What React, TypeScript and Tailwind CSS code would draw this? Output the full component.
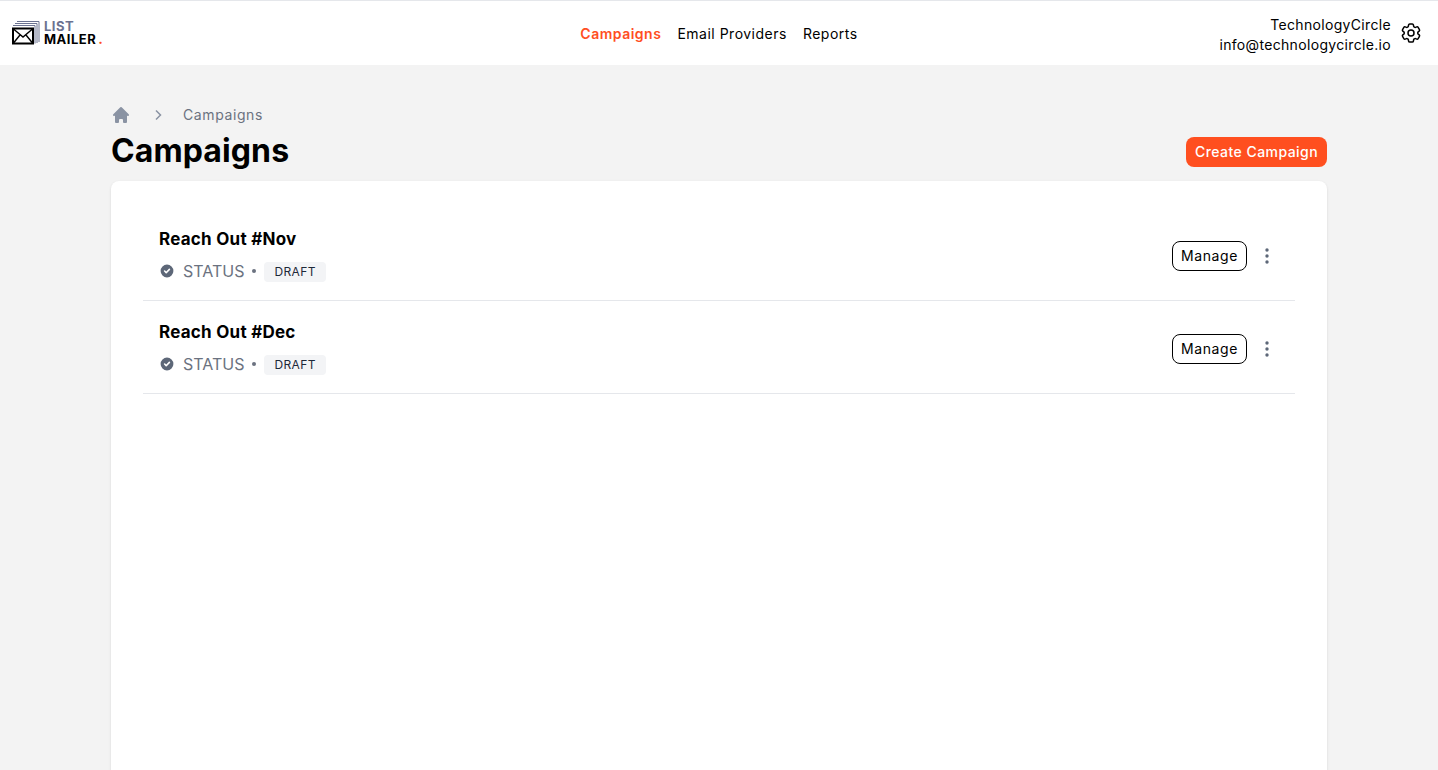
import { HiOutlineCog6Tooth } from 'react-icons/hi2';

function Logo() {
  return (
    <div className="flex items-center gap-[3px] mt-[-1px] ml-[-4px]">
      <svg width="30" height="25" viewBox="0 0 30 25" fill="none">
        <path d="M6 1.5H28V22" stroke="#6b7290" strokeWidth="1" />
        <path d="M4 3.5H26V23" stroke="#6b7290" strokeWidth="1" />
        <path d="M2 5.5H24V23.5" stroke="#6b7290" strokeWidth="1" />
        <rect x="2" y="8.5" width="20" height="15" fill="#fff" stroke="#000" strokeWidth="2" />
        <path d="M2.5 9L12 17L21.5 9M2.5 23L9 15M21.5 23L15 15" stroke="#000" strokeWidth="1.4" />
      </svg>
      <div className="flex flex-col text-[13px] leading-[13px] font-bold tracking-[0.5px]">
        <span className="text-[#6b7290]">LIST</span>
        <span className="text-black">
          MAILER<span className="ml-[2px] font-extrabold text-[#ff4f1f]">.</span>
        </span>
      </div>
    </div>
  );
}

function CampaignRow({ name }: { name: string }) {
  return (
    <div className="flex items-center justify-between h-[93px] px-4 pt-[2px] border-b border-gray-200">
      <div className="flex flex-col mb-[3px]">
        <div className="text-[17px] leading-6 font-bold text-black tracking-[0.25px]">{name}</div>
        <div className="flex items-center mt-[10px] h-5">
          <svg className="w-4 h-4 mr-[8px]" viewBox="0 0 20 20" fill="#5d6778">
            <path
              fillRule="evenodd"
              d="M10 18a8 8 0 100-16 8 8 0 000 16zm3.707-9.293a1 1 0 00-1.414-1.414L9 10.586 7.707 9.293a1 1 0 00-1.414 1.414l2 2a1 1 0 001.414 0l4-4z"
              clipRule="evenodd"
            />
          </svg>
          <span className="text-[16px] text-[#6b7280]">STATUS</span>
          <span className="w-1 h-1 rounded-full bg-[#6b7280] mx-2"></span>
          <span className="h-5 mt-[2px] px-[10px] flex items-center rounded bg-gray-100 text-[12px] text-gray-800 tracking-[0.4px]">
            DRAFT
          </span>
        </div>
      </div>
      <div className="flex items-center mt-[2px] mr-[2px]">
        <button className="w-[75px] h-[30px] pb-[2px] rounded-lg border border-black bg-white text-[14px] text-black tracking-[0.6px]">
          Manage
        </button>
        <svg className="w-5 h-5 ml-[10px]" viewBox="0 0 20 20" fill="#5d6778">
          <circle cx="10" cy="4" r="1.7" />
          <circle cx="10" cy="10" r="1.7" />
          <circle cx="10" cy="16" r="1.7" />
        </svg>
      </div>
    </div>
  );
}

export default function App() {
  return (
    <div className="h-[770px] overflow-hidden bg-[#f3f3f3] font-['Inter',sans-serif]">
      <header className="h-[65px] bg-white border-t border-gray-200 grid grid-cols-[1fr_auto_1fr] items-center px-[15px]">
        <Logo />
        <nav className="flex items-center gap-4 text-[14px] tracking-[0.5px] text-black">
          <span className="font-semibold text-[#ff4f1f]">Campaigns</span>
          <span>Email Providers</span>
          <span>Reports</span>
        </nav>
        <div className="flex items-center justify-end gap-2">
          <div className="text-right text-[14px] leading-5 tracking-[0.33px] text-black pt-[3px]">
            <div>TechnologyCircle</div>
            <div>info@technologycircle.io</div>
          </div>
          <HiOutlineCog6Tooth className="w-6 h-6 text-black" />
        </div>
      </header>
      <main className="max-w-7xl mx-auto px-8">
        <div className="flex items-center h-5 mt-[39px] text-[14px] text-[#6b7280] tracking-[0.6px]">
          <svg className="w-5 h-5 mt-[2px]" viewBox="0 0 20 20" fill="#8a93a3">
            <path d="M10.707 2.293a1 1 0 00-1.414 0l-7 7a1 1 0 001.414 1.414L4 10.414V17a1 1 0 001 1h2a1 1 0 001-1v-2a1 1 0 011-1h2a1 1 0 011 1v2a1 1 0 001 1h2a1 1 0 001-1v-6.586l.293.293a1 1 0 001.414-1.414l-7-7z" />
          </svg>
          <svg className="w-5 h-5 mt-[2px] ml-[17px] mr-[15px]" viewBox="0 0 20 20" fill="none" stroke="#8a93a3" strokeWidth="1.5">
            <path d="M8 5.5l4.5 4.5L8 14.5" />
          </svg>
          <span>Campaigns</span>
        </div>
        <div className="flex items-center justify-between mt-[6px] h-[40px]">
          <h1 className="text-[32px] leading-9 mt-[2px] font-bold text-black tracking-[0.1px]">Campaigns</h1>
          <button className="w-[141px] h-[30px] pb-[1px] rounded-lg bg-[#ff4f1f] text-white text-[14px] tracking-[0.45px] font-medium mt-[4px]">
            Create Campaign
          </button>
        </div>
        <div className="mt-[11px] h-[640px] rounded-lg bg-white shadow-sm px-8 pt-[27px]">
          <CampaignRow name="Reach Out #Nov" />
          <CampaignRow name="Reach Out #Dec" />
        </div>
      </main>
    </div>
  );
}
